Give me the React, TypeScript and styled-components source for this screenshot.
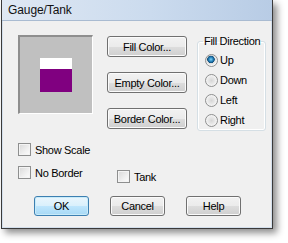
import React from 'react';
import styled, { createGlobalStyle } from 'styled-components';

const Global = createGlobalStyle`
  html, body { margin: 0; padding: 0; background: #fff; }
  body { font-family: "Liberation Sans", Arial, sans-serif; }
  * { box-sizing: border-box; }
`;

const Stage = styled.div`
  width: 288px;
  height: 243px;
  overflow: hidden;
  background: #fff;
  padding-left: 1px;
`;

const Window = styled.div`
  width: 272px;
  height: 229px;
  display: flex;
  flex-direction: column;
  border: 1px solid #3a3a3a;
  border-top: none;
  background: #d3dfec;
  box-shadow: 4px 4px 7px rgba(0, 0, 0, 0.45);
`;

const TitleBar = styled.div`
  height: 21px;
  flex: none;
  display: flex;
  align-items: center;
  padding: 0 0 1px 6px;
  background: linear-gradient(90deg, #dfe8f3 0%, #cbdbee 55%, #b8cce5 100%);
  border-bottom: 1px solid #a9bbd1;
  font-size: 12px;
  color: #111;
  letter-spacing: -0.1px;
`;

const Client = styled.div`
  flex: 1;
  margin: 0 1px 1px 1px;
  background: #f0f0f0;
  padding: 14px 0 0 15px;
  display: flex;
  flex-direction: column;
  font-size: 11px;
  letter-spacing: -0.3px;
  color: #000;
`;

const TopRow = styled.div`
  display: flex;
  align-items: flex-start;
`;

const Preview = styled.div`
  width: 75px;
  height: 79px;
  flex: none;
  background: #c0c0c0;
  border-top: 2px solid #8e8e8e;
  border-left: 2px solid #8e8e8e;
  border-right: 1px solid #fff;
  border-bottom: 1px solid #fff;
  display: flex;
  align-items: center;
  justify-content: center;
`;

const Gauge = styled.div`
  width: 32px;
  display: flex;
  flex-direction: column;
`;

const GaugePart = styled.div<{ $h: number; $c: string }>`
  height: ${(p) => p.$h}px;
  background: ${(p) => p.$c};
`;

const ButtonColumn = styled.div`
  display: flex;
  flex-direction: column;
  gap: 15px;
  margin: 1px 0 0 14px;
`;

const Button = styled.button<{ $w: number; $h: number; $default?: boolean }>`
  width: ${(p) => p.$w}px;
  height: ${(p) => p.$h}px;
  padding: 0;
  font-family: "Liberation Sans", Arial, sans-serif;
  font-size: 11px;
  letter-spacing: -0.3px;
  color: #000;
  border-radius: 3px;
  border: 1px solid ${(p) => (p.$default ? '#3c7fb1' : '#707070')};
  background: ${(p) =>
    p.$default
      ? 'linear-gradient(#eaf6fd 0%, #d9f0fc 50%, #bee6fd 51%, #a7d9f5 100%)'
      : 'linear-gradient(#f2f2f2 0%, #ebebeb 50%, #dddddd 51%, #cfcfcf 100%)'};
  box-shadow: inset 0 0 0 1px ${(p) => (p.$default ? '#c8ebf9' : '#fbfbfb')};
`;

const Group = styled.fieldset`
  width: 69px;
  margin: 0 0 0 10px;
  padding: 2px 0 0 7px;
  border: 1px solid #d5dfe5;
  border-radius: 3px;
  box-shadow: inset 0 0 0 1px #fff;
  min-width: 0;
`;

const Legend = styled.legend`
  padding: 0 1px;
  margin-left: -2px;
  line-height: 13px;
  font-size: 11px;
`;

const OptionRow = styled.label`
  height: 20px;
  display: flex;
  align-items: center;
  gap: 2px;
  white-space: nowrap;
`;

const Radio = styled.span<{ $on?: boolean }>`
  width: 13px;
  height: 13px;
  flex: none;
  border-radius: 50%;
  border: 1px solid #8e8f8f;
  background: ${(p) =>
    p.$on
      ? 'radial-gradient(circle at 45% 40%, #7fd3f7 0, #2a86bf 2px, #0f4e7a 3.5px, #dcdcdc 4px, #f6f6f6 6px)'
      : 'radial-gradient(circle at 50% 50%, #d6d6d6 0, #e6e6e6 3px, #f8f8f8 6px)'};
`;

const CheckRow = styled.div<{ $top: number }>`
  margin-top: ${(p) => p.$top}px;
  display: grid;
  grid-template-columns: 99px auto;
  align-items: start;
`;

const CheckItem = styled.label<{ $top?: number }>`
  height: 13px;
  margin-top: ${(p) => p.$top ?? 0}px;
  display: flex;
  align-items: center;
  gap: 4px;
  white-space: nowrap;
`;

const Box = styled.span`
  width: 13px;
  height: 13px;
  flex: none;
  border: 1px solid #8e8f8f;
  background: linear-gradient(135deg, #d8d8d8 0%, #f0f0f0 60%, #fdfdfd 100%);
  box-shadow: inset 0 0 0 1px #f4f4f4;
`;

const ButtonRow = styled.div`
  margin-top: 13px;
  padding-left: 16px;
  display: flex;
  gap: 21px;
`;

const directions = ['Up', 'Down', 'Left', 'Right'];

export default function App() {
  return (
    <Stage>
      <Global />
      <Window>
        <TitleBar>Gauge/Tank</TitleBar>
        <Client>
          <TopRow>
            <Preview>
              <Gauge>
                <GaugePart $h={11} $c="#ffffff" />
                <GaugePart $h={23} $c="#800080" />
              </Gauge>
            </Preview>
            <ButtonColumn>
              <Button $w={80} $h={21}>Fill Color...</Button>
              <Button $w={80} $h={21}>Empty Color...</Button>
              <Button $w={80} $h={21}>Border Color...</Button>
            </ButtonColumn>
            <Group>
              <Legend>Fill Direction</Legend>
              {directions.map((d, i) => (
                <OptionRow key={d}>
                  <Radio $on={i === 0} />
                  {d}
                </OptionRow>
              ))}
            </Group>
          </TopRow>
          <CheckRow $top={12}>
            <CheckItem>
              <Box />
              Show Scale
            </CheckItem>
          </CheckRow>
          <CheckRow $top={10}>
            <CheckItem>
              <Box />
              No Border
            </CheckItem>
            <CheckItem $top={4}>
              <Box />
              Tank
            </CheckItem>
          </CheckRow>
          <ButtonRow>
            <Button $w={55} $h={20} $default>OK</Button>
            <Button $w={55} $h={20}>Cancel</Button>
            <Button $w={55} $h={20}>Help</Button>
          </ButtonRow>
        </Client>
      </Window>
    </Stage>
  );
}
